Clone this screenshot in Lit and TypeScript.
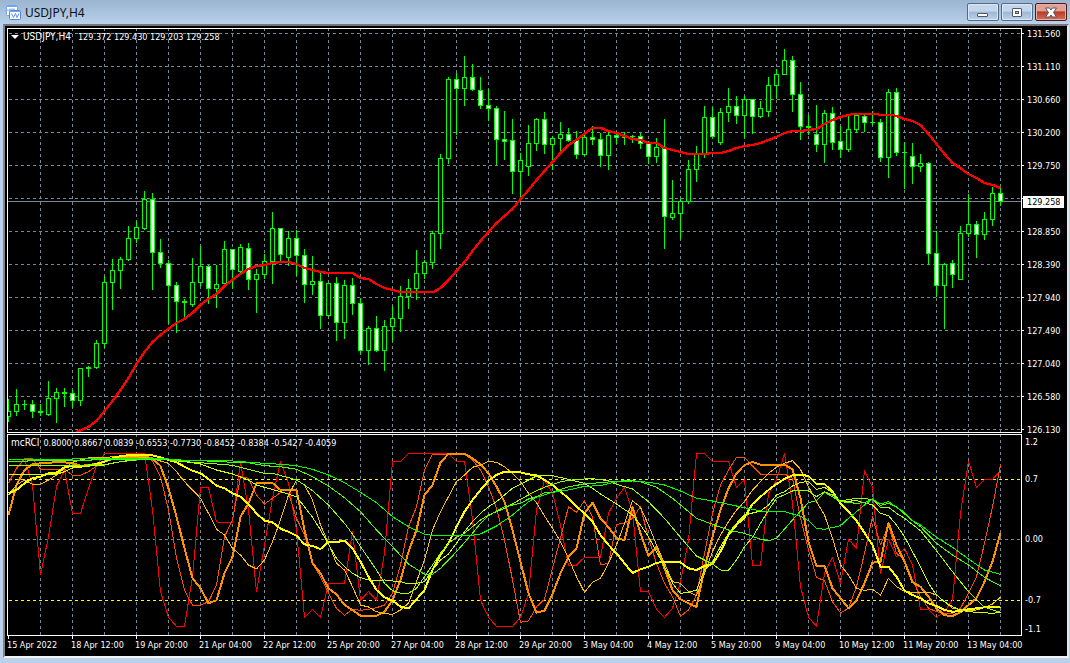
import { LitElement, html, svg, css } from "lit";
import { customElement, property } from "lit/decorators.js";

/* high, body top, body bottom, low, filled (1) or hollow (0); one bar every 8 units */
const BARS = `
399 411 416 421 0|389 404 411 415 0|400 404 404 409 0|400 404 411 417 1|404 411 412 415 0|381 398 414 415 0
388 392 398 422 0|388 392 393 406 0|390 393 400 407 1|368 368 400 405 0|366 367 368 376 0|340 343 367 368 0
276 282 343 347 0|259 270 282 309 0|257 259 270 288 0|226 238 259 260 0|221 227 238 242 0|191 199 228 229 0
193 199 252 289 1|239 252 263 267 1|260 263 285 323 1|282 285 301 332 1|299 301 302 317 0|258 282 304 306 0
246 266 282 285 0|265 266 288 303 1|265 284 288 307 0|241 249 283 285 0|249 249 269 288 1|244 247 271 272 0
243 248 279 289 1|269 274 279 312 0|254 261 274 278 0|212 228 261 283 0|228 228 254 262 1|231 238 257 265 0
230 238 255 275 1|249 255 284 302 1|256 281 284 294 0|273 281 315 328 1|283 283 315 316 0|277 283 322 340 1
280 285 322 338 0|278 285 303 314 1|298 303 350 353 1|326 328 350 364 0|316 328 350 351 1|320 326 350 370 0
306 318 326 341 0|286 296 318 331 0|279 288 296 308 0|250 273 288 299 0|260 262 273 278 0|231 233 262 268 0
154 158 233 248 0|77 79 158 163 0|73 79 88 134 1|56 77 88 105 0|64 77 89 90 1|77 90 105 108 1
89 105 108 120 1|106 108 139 164 1|111 139 141 159 1|119 140 171 193 1|153 160 171 197 0|125 143 166 175 0
118 119 143 150 0|112 119 144 153 1|136 138 144 169 0|122 134 138 150 0|128 134 140 141 1|131 140 154 158 1
134 137 154 155 0|126 137 139 144 1|133 139 155 166 1|132 135 155 169 0|132 135 137 143 1|132 136 137 144 0
135 136 136 142 0|133 136 143 148 1|141 143 156 163 1|138 147 156 162 0|119 147 216 248 1|180 213 217 219 0
199 201 213 238 0|160 169 201 203 0|146 154 169 181 0|106 117 154 157 0|107 117 136 138 1|108 112 142 144 0
88 106 112 121 0|96 106 115 123 1|96 99 115 137 0|99 99 116 133 1|101 108 116 117 0|77 85 111 116 0
69 74 85 98 0|49 60 74 74 0|56 60 94 111 1|82 94 126 139 1|115 126 127 134 0|105 134 144 151 1
110 113 144 162 0|107 113 142 149 1|126 141 149 157 1|116 129 149 151 0|114 115 129 132 0|115 116 122 131 1
111 122 122 124 0|119 122 157 161 1|89 92 157 177 0|88 92 152 155 1|142 152 152 188 0|143 156 166 183 1
154 163 166 171 0|162 163 253 264 1|231 253 285 296 1|263 264 285 328 0|260 263 274 287 1|226 233 279 279 0
194 224 233 236 0|221 224 234 257 1|212 219 234 239 0|187 193 219 225 0|188 193 201 205 1`
  .trim()
  .split(/[|\n]/)
  .map((row) => row.trim().split(" ").map(Number));

/* moving average: x,y in window units */
const AVERAGE = `76,432 88,427 96,421 104,411 112,401 120,390 128,378 136,364 144,352 152,342 160,335 168,329
176,323 184,319 192,313 200,305 208,299 216,294 224,286 232,280 240,274 248,269 256,266 264,265 272,263 280,262
288,262 296,264 304,268 312,270 320,272 328,273 352,273 360,278 368,279 376,284 384,288 392,290 400,292 433,292
440,288 448,280 456,271 464,262 472,251 480,241 488,232 496,223 504,216 512,209 520,199 528,190 536,180 544,171
552,162 560,153 568,145 576,140 584,134 592,128 600,128 608,131 616,133 624,136 632,139 640,140 648,143 656,143
664,148 672,150 680,152 688,154 704,154 712,153 720,153 728,151 736,148 744,146 752,145 760,143 768,140 776,137
784,133 792,131 800,131 816,129 824,124 832,120 840,117 852,114 876,114 880,115 892,115 896,116 904,119 912,121
920,125 928,134 936,144 944,154 952,163 960,168 968,174 976,178 984,183 992,185 1000,188`
  .split(/\s+/)
  .map((p) => p.split(",").map(Number));

interface Curve {
  colour: string;
  width: number;
  /* bar:level pairs, three level steps to one unit */
  data: string;
}

const CURVES: Curve[] = [
  {
    colour: "#ff0000",
    width: 1,
    data: `0:160 1:118 2:86 3:165 4:435 5:320 6:170 7:120 8:250 9:250 10:175 11:108 12:70 17:70 18:240 19:485
    20:562 21:589 22:589 23:440 24:172 25:172 26:276 28:276 29:96 30:240 31:485 32:345 33:205 34:94 35:160 36:300
    37:562 38:538 39:562 40:460 42:460 43:305 44:511 45:485 46:511 47:370 48:94 49:94 50:70 55:70 56:94 57:94
    58:270 59:511 60:562 61:589 63:589 64:562 65:490 66:240 67:150 68:190 69:285 70:405 71:405 72:382 74:382
    75:250 76:205 77:172 78:245 79:485 80:485 81:538 82:562 83:535 84:455 85:330 86:70 87:70 88:94 90:94 91:172
    92:148 93:406 94:406 95:190 96:150 97:70 98:220 99:470 100:562 101:589 102:430 103:382 104:460 105:328
    106:355 107:122 108:172 109:432 110:328 111:380 112:355 113:405 114:538 115:538 116:562 117:545 118:510
    119:250 120:94 121:172 122:148 123:148 124:122`,
  },
  {
    colour: "#ff4800",
    width: 1,
    data: `0:158 1:115 2:86 3:86 4:118 7:118 8:136 9:136 10:125 11:108 12:95 14:82 17:82 18:92 19:140 20:240
    21:385 22:480 23:526 24:526 25:515 26:465 27:320 28:270 29:140 30:145 31:195 32:222 33:205 34:188 35:190
    36:265 37:315 38:400 39:440 40:490 41:535 42:556 43:538 44:541 45:538 46:533 47:525 48:490 49:405 50:290
    51:230 52:120 53:73 57:73 58:90 59:120 60:170 61:235 62:330 63:450 64:577 65:573 66:530 67:508 68:415
    69:325 70:230 71:247 72:212 73:260 74:405 75:400 76:283 77:280 78:265 79:230 80:325 81:400 82:460 83:500
    84:559 85:540 86:495 87:370 88:250 89:165 90:120 91:82 92:82 93:108 94:132 97:132 98:145 99:265 100:360
    101:442 102:452 103:515 104:549 105:535 106:470 107:370 108:260 109:345 110:285 111:370 112:390 113:450
    114:500 115:535 116:545 117:552 118:550 119:535 120:490 121:440 122:340 123:230 124:105`,
  },
  {
    colour: "#ff9000",
    width: 2,
    data: `0:255 1:165 2:120 3:103 4:100 5:98 6:97 7:97 8:100 9:107 10:106 11:101 12:95 13:86 14:80 17:80 18:85
    19:108 20:175 21:260 22:355 23:445 24:475 25:520 26:511 27:430 28:380 29:260 30:220 31:160 33:159 34:180
    36:180 37:300 38:400 39:430 40:475 41:493 42:525 43:540 44:557 46:557 47:545 48:511 49:450 50:365 51:300
    52:195 53:165 54:98 55:71 57:71 58:85 59:103 60:130 61:170 62:215 63:300 64:395 65:490 66:548 67:542 68:492
    69:430 70:380 71:355 72:250 73:218 74:265 75:292 76:325 77:330 78:232 79:310 80:378 81:350 82:415 83:480
    84:508 85:520 86:531 87:415 88:320 89:240 90:175 91:130 92:105 93:96 94:104 97:104 98:118 99:205 100:335
    101:407 102:407 103:475 104:505 105:535 106:511 107:460 108:398 109:395 110:278 111:345 112:395 113:457
    114:470 115:500 116:535 117:556 118:558 119:547 120:525 121:505 122:455 123:395 124:308`,
  },
  {
    colour: "#ffc000",
    width: 1,
    data: `0:195 1:165 2:150 3:163 4:163 5:150 6:135 7:115 8:97 9:90 10:84 12:82 15:78 18:85 19:93 20:100 21:125
    22:155 23:180 24:205 25:250 26:298 27:315 28:355 29:375 30:405 31:417 32:390 33:335 34:270 35:195 36:150
    37:165 38:210 39:285 40:340 41:400 42:420 43:470 44:525 45:531 46:545 47:551 48:553 49:540 50:520 51:455
    52:390 53:300 54:245 55:200 56:155 57:135 58:112 59:105 60:94 61:97 62:110 63:130 64:155 65:190 66:218
    67:258 68:295 69:335 70:385 71:440 72:487 73:457 74:445 75:400 76:345 77:280 78:212 79:232 80:285 81:345
    82:400 83:455 84:460 85:485 86:497 87:430 88:365 89:315 90:275 91:240 92:215 93:180 94:155 95:130 96:112
    97:100 98:92 99:118 100:170 101:215 102:255 103:325 104:405 105:435 106:475 107:481 108:478 109:495
    110:445 111:470 112:484 113:487 115:487 116:495 117:515 118:535 120:542 121:540 122:532 123:522 124:502`,
  },
  {
    colour: "#ffff00",
    width: 2,
    data: `0:190 1:180 2:160 3:145 4:140 5:130 6:128 7:112 8:108 9:110 10:107 11:102 12:95 13:85 14:78 15:76 18:76
    19:82 20:90 21:97 22:110 23:122 24:130 25:147 26:167 27:175 28:190 29:200 30:222 31:250 32:272 33:277
    34:296 35:305 36:317 37:343 38:348 39:357 40:336 41:336 42:332 43:355 44:395 45:440 46:480 47:502 48:512
    49:530 50:535 51:508 52:480 53:420 54:375 55:340 56:290 57:245 58:210 59:180 60:152 61:135 62:125 64:127
    65:133 66:136 67:150 68:165 69:185 70:205 71:230 72:250 73:275 74:315 75:345 76:370 77:400 78:429 79:418
    80:410 81:398 82:396 84:397 85:415 86:420 87:408 88:402 89:365 90:315 91:285 92:262 93:222 94:200 95:180
    96:162 97:147 98:136 99:134 100:138 101:162 102:162 103:185 104:220 105:245 106:272 107:308 108:345
    109:410 110:410 111:440 112:482 113:495 114:505 115:520 116:528 117:540 118:545 119:543 120:538 121:535
    122:532 124:530`,
  },
  {
    colour: "#ccff00",
    width: 1,
    data: `0:133 6:133 7:125 8:114 10:108 12:105 14:95 16:88 18:88 20:90 22:95 24:102 26:120 28:132 30:150 31:165
    32:172 34:185 36:200 37:230 38:262 39:300 40:343 41:385 42:410 43:430 44:443 45:450 46:452 47:450 48:453
    49:455 50:462 51:460 52:455 53:420 54:390 55:372 56:340 57:305 58:275 59:250 60:230 61:215 62:195 63:175
    64:163 65:150 66:138 68:137 70:148 72:160 73:175 74:192 76:222 78:255 79:285 80:320 81:365 82:410 83:460
    84:490 85:487 86:480 87:420 88:395 89:350 90:310 91:280 92:255 94:243 95:225 96:195 97:185 98:168 99:157
    100:155 101:178 102:172 103:188 104:215 106:212 108:225 109:250 110:257 111:285 112:320 113:365 114:410
    115:460 116:495 117:515 118:530 119:540 120:545 123:550 124:547`,
  },
  {
    colour: "#99ff00",
    width: 1,
    data: `0:106 8:106 12:104 14:95 16:90 20:88 23:97 24:98 28:106 30:118 32:130 33:130 35:143 36:150 37:165 38:182
    40:225 42:280 43:312 44:350 45:385 46:420 47:460 48:482 49:490 50:490 51:475 52:440 53:405 54:370 55:340
    56:322 57:310 58:290 59:270 60:255 62:235 64:208 66:182 67:172 69:155 71:148 73:146 75:152 76:163 78:177
    80:215 82:265 84:322 86:378 88:402 89:420 90:421 91:390 92:350 93:322 94:280 95:240 96:205 98:183 99:181
    100:183 101:200 102:185 103:195 104:213 106:205 108:208 109:232 110:232 111:250 112:265 114:302 116:362
    118:425 120:485 122:532 124:547`,
  },
  {
    colour: "#4cff00",
    width: 1,
    data: `0:94 16:88 20:90 24:92 28:97 30:98 32:107 34:110 36:118 38:140 40:168 42:203 44:245 46:300 48:350 50:402
    52:433 53:433 54:415 56:365 58:310 59:280 60:257 61:243 62:230 63:225 64:220 65:207 66:200 67:188 68:187
    70:170 72:162 75:156 77:152 78:152 79:155 81:172 83:205 86:265 88:283 90:300 92:310 94:328 95:332 96:325
    98:270 99:243 100:218 101:212 102:187 103:200 104:215 106:220 107:218 108:208 109:226 110:220 111:230
    112:252 113:272 114:290 116:340 118:375 120:405 122:442 124:468`,
  },
  {
    colour: "#00ff00",
    width: 1,
    data: `0:89 7:89 8:87 16:85 20:87 22:91 28:93 32:100 34:103 36:107 38:118 40:135 42:158 44:187 46:218 48:260
    50:290 52:313 53:316 58:316 59:312 61:288 63:255 65:215 66:202 68:187 70:180 72:169 74:167 76:155 78:153
    80:157 82:165 84:183 86:205 88:213 90:223 92:233 94:243 96:245 97:245 99:259 100:272 101:295 102:298
    104:287 105:265 106:245 107:225 108:207 109:222 110:215 111:232 112:247 113:272 114:285 116:322 118:352
    120:387 122:420 124:433`,
  },
];

const PRICES = [
  "131.560", "131.110", "130.660", "130.200", "129.750", "", "128.850",
  "128.390", "127.940", "127.490", "127.040", "126.580", "126.130",
];
const LEVELS = ["1.2", "0.7", "0.00", "-0.7", "-1.1"];
const TIMES = [
  "15 Apr 2022", "18 Apr 12:00", "19 Apr 20:00", "21 Apr 04:00", "22 Apr 12:00", "25 Apr 20:00",
  "27 Apr 04:00", "28 Apr 12:00", "29 Apr 20:00", "3 May 04:00", "4 May 12:00", "5 May 20:00",
  "9 May 04:00", "10 May 12:00", "11 May 20:00", "13 May 04:00",
];

const GRID = "#778899";
const barX = (index: number) => 1.5 + index * 8;

const verticals = (height: number) =>
  Array.from({ length: 31 }, (_, i) => {
    const x = 33.5 + i * 32;
    return svg`<line x1=${x} x2=${x} y1="0" y2=${height} stroke=${GRID} stroke-dasharray="3 3"/>`;
  });

const horizontal = (y: number, colour = GRID) =>
  svg`<line x1="2" x2="1014" y1=${y} y2=${y} stroke=${colour} stroke-dasharray="3 3"/>`;

const panelStyles = css`
  :host {
    display: block;
    position: relative;
    min-width: 0;
    min-height: 0;
    color: #fff;
  }
  .plot {
    display: block;
    position: absolute;
    inset: 0;
    width: 100%;
    height: 100%;
  }
  .caption {
    position: absolute;
    top: 3px;
    left: 4px;
    display: flex;
    align-items: center;
    gap: 4px;
    margin: 0;
    font-size: 9px;
    font-weight: 400;
    line-height: 12px;
    white-space: pre;
  }
  .name {
    font-size: 10px;
  }
`;

@customElement("price-panel")
export class PricePanel extends LitElement {
  static styles = [
    panelStyles,
    css`
      .marker {
        width: 8px;
        height: 4px;
        background: #fff;
        clip-path: polygon(0 0, 100% 0, 50% 100%);
      }
      .quotes {
        padding-left: 3px;
      }
    `,
  ];

  render() {
    const average = AVERAGE.map(([x, y]) => `${x - 6.5},${y - 28}`).join(" ");
    return html`
      <svg class="plot" viewBox="0 0 1015 405" preserveAspectRatio="none" shape-rendering="crispEdges" fill="none" role="img" aria-label="Price chart">
        ${verticals(405)} ${PRICES.map((_, i) => horizontal(5.5 + i * 33))}
        <line x1="1" x2="1014" y1="173.5" y2="173.5" stroke=${GRID} />
        ${BARS.map(([high, top, bottom, low, filled], i) => {
          const x = barX(i);
          const height = bottom - top;
          return svg`<path d="M${x} ${high - 28}V${low - 27}" stroke="#0f0"/>${
            height < 2
              ? svg`<rect x=${x - 2.5} y=${top - 28} width="5" height=${height + 1} fill="#0f0"/>`
              : svg`<rect x=${x - 2} y=${top - 27.5} width="4" height=${height} stroke="#0f0" fill=${filled ? "#fff" : "#000"}/>`
          }`;
        })}
        <polyline points=${average} stroke="#f00" stroke-width="2.4" stroke-linejoin="round" />
        <rect x="0.5" y="0.5" width="1014" height="404" stroke="#fff" />
      </svg>
      <h2 class="caption"><span class="marker"></span><span class="name">USDJPY,H4</span><span class="quotes">129.372 129.430 129.203 129.258</span></h2>
    `;
  }
}

@customElement("oscillator-panel")
export class OscillatorPanel extends LitElement {
  static styles = panelStyles;

  render() {
    return html`
      <svg class="plot" viewBox="0 0 1015 202" preserveAspectRatio="none" shape-rendering="crispEdges" fill="none" role="img" aria-label="mcRCI oscillator">
        ${verticals(202)} ${horizontal(105.5)} ${horizontal(45.5, "#ff0")} ${horizontal(166.5, "#ff0")}
        ${CURVES.map(({ colour, width, data }) => {
          const points = data
            .trim()
            .split(/\s+/)
            .map((pair) => {
              const [bar, level] = pair.split(":").map(Number);
              return `${barX(bar)},${(level / 3 - 4).toFixed(1)}`;
            })
            .join(" ");
          return svg`<polyline points=${points} stroke=${colour} stroke-width=${width} stroke-linejoin="round"/>`;
        })}
        <rect x="0.5" y="0.5" width="1014" height="201" stroke="#fff" />
      </svg>
      <h2 class="caption"><span class="name">mcRCI</span><span>0.8000 0.8667 0.0839 -0.6553 -0.7730 -0.8452 -0.8384 -0.5427 -0.4059</span></h2>
    `;
  }
}

@customElement("caption-button")
export class CaptionButton extends LitElement {
  @property() kind: "minimise" | "restore" | "close" = "minimise";
  @property() label = "";

  static styles = css`
    :host {
      display: block;
    }
    .button {
      display: grid;
      place-items: center;
      box-sizing: border-box;
      width: 32px;
      height: 18px;
      padding: 0;
      border: 1px solid #54698a;
      border-radius: 2px;
      background: linear-gradient(#c3d6ec 0 45%, #9db8d5 50%, #bbd3ea);
      box-shadow: inset 0 0 0 1px #d8e6f5;
    }
    .close {
      border-color: #4b1820;
      background: linear-gradient(#e0a093 0 42%, #b83a24 50%, #d3705a);
      box-shadow: inset 0 0 0 1px #e6b0a5;
    }
    svg {
      display: block;
    }
  `;

  render() {
    const glyph = {
      minimise: svg`<rect x="1.5" y="6.5" width="10" height="3" rx="0.5" fill="#fff" stroke="#535666"/>`,
      restore: svg`<rect x="2.5" y="1.5" width="9" height="8" rx="0.5" fill="#fff" stroke="#535666"/><rect x="5.5" y="4.5" width="3" height="2" fill="#9db8d5" stroke="#535666"/>`,
      close: svg`<path d="M1.500 1h4L7 3l1.500-2h4L9.500 5.500 12.500 10h-4L7 8 5.500 10h-4l3-4.500z" fill="#fff" stroke="#535666"/>`,
    }[this.kind];
    return html`<button class="button ${this.kind}" type="button" aria-label=${this.label}>
      <svg width="14" height="11" viewBox="0 0 14 11">${glyph}</svg>
    </button>`;
  }
}

@customElement("app-root")
export class AppRoot extends LitElement {
  static styles = css`
    :host {
      display: flex;
      flex-direction: column;
      box-sizing: border-box;
      height: 100vh;
      min-height: 320px;
      padding: 0 1px 5px 3px;
      overflow: hidden;
      background: #b9d1ea;
      font-family: "DejaVu Sans Condensed", "Noto Sans", sans-serif;
    }
    .titlebar {
      display: flex;
      align-items: center;
      gap: 4px;
      height: 24px;
      margin: 0 -1px 0 -3px;
      padding: 0 3px 0 6px;
      background: linear-gradient(#9ab4d1, #b9d1ea);
    }
    .title {
      flex: 1;
      margin: 0;
      padding-top: 2px;
      color: #111;
      font: 400 12px/18px "Noto Sans", "Open Sans", sans-serif;
    }
    .buttons {
      display: flex;
      gap: 2px;
    }
    .client {
      flex: 1;
      display: grid;
      grid-template-columns: minmax(0, 1fr) 45px;
      grid-template-rows: minmax(0, 405fr) minmax(0, 202fr) 19px;
      row-gap: 1px;
      min-height: 0;
      padding: 2px 0 0 2px;
      border: 2px solid;
      border-color: #777 #e8e8e8 #f4f4f4 #858585;
      background: #000;
      color: #fff;
      font-size: 9px;
      line-height: 12px;
    }
    .scale {
      display: grid;
      margin: 0;
      padding: 0;
      list-style: none;
    }
    .prices {
      position: relative;
      grid-template-rows: repeat(13, 1fr);
      height: calc(100% + 24px);
      margin-top: -11px;
    }
    .price {
      display: flex;
      align-items: center;
      gap: 3px;
    }
    .price::before {
      content: "";
      width: 2px;
      height: 1px;
      background: #fff;
    }
    .current {
      position: absolute;
      top: 179px;
      left: 1px;
      width: 41px;
      box-sizing: border-box;
      padding-left: 4px;
      background: #fff;
      color: #000;
    }
    .levels {
      grid-template-rows: 14fr 37fr 60fr 61fr 29fr 1fr;
      padding-left: 3px;
    }
    .level {
      align-self: end;
    }
    .times {
      display: flex;
      grid-column: 1 / -1;
      margin: 0;
      padding: 0;
      list-style: none;
    }
    .time {
      position: relative;
      flex: 0 0 calc((100% - 36px) / 16);
      padding-top: 2px;
      white-space: nowrap;
    }
    .time::before {
      content: "";
      position: absolute;
      top: -1px;
      left: 1px;
      width: 1px;
      height: 3px;
      background: #fff;
    }
  `;

  render() {
    return html`
      <header class="titlebar">
        <svg width="15" height="15" viewBox="0 0 15 15" aria-hidden="true">
          <rect x="0.500" y="0.500" width="11" height="10" rx="1" fill="#fff" stroke="#76a4ec" />
          <path d="M1 1.500h10" stroke="#76a4ec" />
          <path d="M2 6V4.500M4 6V3.500M6 5V3.500M8 5V3.500" fill="none" stroke="#4f86e0" />
          <rect x="3.500" y="5.500" width="11" height="9" rx="1" fill="#fff" stroke="#4f86e0" />
          <path d="M4 6.500h10" stroke="#76a4ec" />
          <path d="M5.500 8.500l2 4 2-4 1.500 4 2-4" fill="none" stroke="#5b90e6" />
        </svg>
        <h1 class="title">USDJPY,H4</h1>
        <div class="buttons">
          <caption-button kind="minimise" label="Minimise"></caption-button>
          <caption-button kind="restore" label="Restore"></caption-button>
          <caption-button kind="close" label="Close"></caption-button>
        </div>
      </header>
      <main class="client">
        <price-panel></price-panel>
        <ul class="scale prices">
          ${PRICES.map((p) => html`<li class="price">${p}</li>`)}
          <li class="current">129.258</li>
        </ul>
        <oscillator-panel></oscillator-panel>
        <ul class="scale levels">
          ${LEVELS.map((l) => html`<li class="level">${l}</li>`)}
        </ul>
        <ul class="times">
          ${TIMES.map((t) => html`<li class="time">${t}</li>`)}
        </ul>
      </main>
    `;
  }
}
